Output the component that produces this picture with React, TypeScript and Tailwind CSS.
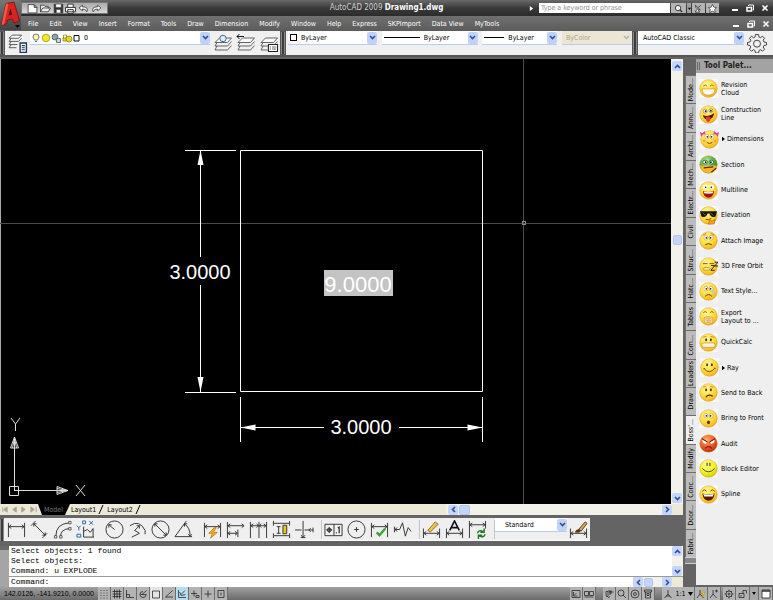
import React, { useState } from 'react';

const MENUS = [
  'File', 'Edit', 'View', 'Insert', 'Format', 'Tools', 'Draw', 'Dimension', 'Modify',
  'Window', 'Help', 'Express', 'SKPImport', 'Data View', 'MyTools',
];

const PALETTE_TABS = [
  'Mode...', 'Anno...', 'Archi...', 'Mech...', 'Electr...', 'Civil', 'Struc...', 'Hatc...', 'Tables',
  'Com...', 'Leaders', 'Draw', "Boss'...", 'Modify', 'Conc...', 'Door...', 'Fabri...',
];

interface Tool {
  label: string;
  flyout?: boolean;
  tone?: 'gold' | 'green' | 'red' | 'lime';
  face: React.ReactNode;
}

const dots = (
  <>
    <ellipse cx="7.5" cy="7" rx="1" ry="1.6" fill="#5b2c00" />
    <ellipse cx="12.5" cy="7" rx="1" ry="1.6" fill="#5b2c00" />
  </>
);

const bigEyes = (
  <>
    <ellipse cx="7.3" cy="7" rx="2.1" ry="2.6" fill="#fff" stroke="#b77a00" strokeWidth=".5" />
    <ellipse cx="12.7" cy="7" rx="2.1" ry="2.6" fill="#fff" stroke="#b77a00" strokeWidth=".5" />
    <circle cx="7.8" cy="7.2" r=".9" fill="#222" />
    <circle cx="12.2" cy="7.2" r=".9" fill="#222" />
  </>
);

const TOOLS: Tool[] = [
  {
    label: 'Revision\nCloud',
    face: (
      <>
        <path d="M4.500 7.500q2-2.500 4 0M11.500 7.500q2-2.500 4 0" stroke="#a06a00" strokeWidth=".9" fill="none" />
        <path d="M3 10.500h14q-.5 6.500-7 6.500t-7-6.500z" fill="#fff" stroke="#c08a10" strokeWidth=".7" />
        <path d="M4 13h12" stroke="#e4d8b0" strokeWidth=".5" />
      </>
    ),
  },
  {
    label: 'Construction\nLine',
    face: (
      <>
        <circle cx="6.500" cy="6.500" r="2.200" fill="#fff" stroke="#8a5200" strokeWidth=".6" />
        <circle cx="12.500" cy="5.800" r="2" fill="#fff" stroke="#8a5200" strokeWidth=".6" />
        <circle cx="7" cy="6.500" r="1" fill="#222" />
        <circle cx="12.500" cy="6" r="1" fill="#222" />
        <path d="M4 10.500q6 3 12-2-1 7-7 7-4-.5-5-5z" fill="#5a1400" />
        <path d="M7 13q3-2 5 0 .5 4-2 5-3 0-3-5z" fill="#e23a2e" />
      </>
    ),
  },
  {
    label: 'Dimensions',
    flyout: true,
    face: (
      <>
        <path d="M0 2l4 2-3 3zM5 1l1 4-4-1zM20 2l-4 2 3 3zM15 1l-1 4 4-1z" fill="#d9469a" />
        {bigEyes}
        <circle cx="4.500" cy="11.500" r="1.500" fill="#f59a6a" />
        <circle cx="15.500" cy="11.500" r="1.500" fill="#f59a6a" />
        <path d="M7 13q3 2.500 6 0" stroke="#8a3a00" fill="none" />
      </>
    ),
  },
  {
    label: 'Section',
    tone: 'green',
    face: (
      <>
        <path d="M1 11h18q-1 8-9 8t-9-8z" fill="#f7b52a" />
        <ellipse cx="6.500" cy="7.500" rx="2.500" ry="2" fill="#e8ffe0" stroke="#144d18" strokeWidth=".7" />
        <ellipse cx="13" cy="7.500" rx="2.500" ry="2" fill="#e8ffe0" stroke="#144d18" strokeWidth=".7" />
        <circle cx="7" cy="7.500" r=".9" />
        <circle cx="12.500" cy="7.500" r=".9" />
        <path d="M5 13.500l10-1M13 18l5-4" stroke="#5b2c00" strokeWidth="1.200" fill="none" />
      </>
    ),
  },
  {
    label: 'Multiline',
    face: (
      <>
        <circle cx="6.500" cy="6.500" r="2.500" fill="#fff" />
        <circle cx="13.500" cy="6.500" r="2.500" fill="#fff" />
        <circle cx="7" cy="6.500" r=".8" />
        <circle cx="13" cy="6.500" r=".8" />
        <path d="M4 10.500q6 2 12 0-1 7-6 7t-6-7z" fill="#a01212" />
        <path d="M5 11q5 1.500 10 0l-.5 2q-4.500 1-9 0z" fill="#fff" />
      </>
    ),
  },
  {
    label: 'Elevation',
    face: (
      <>
        <path d="M1 5.500h18l-.5 1.500-1 4q-5 2-6.500-3h-2q-1.500 5-6.500 3l-1-4z" fill="#17170f" />
        <path d="M4 7l3 3M12 7l3 3" stroke="#8d8d7d" strokeWidth=".7" />
        <path d="M7 14q3 1.500 6-1" stroke="#8a3a00" fill="none" />
        <path d="M10 19l1-4 3 1 3-2-1 5z" fill="#f6a51d" stroke="#a86000" strokeWidth=".6" />
      </>
    ),
  },
  {
    label: 'Attach Image',
    face: (
      <>
        <path d="M4 4.500l3.500-2M12.500 2.500l3.500 2" stroke="#a86c00" strokeWidth=".8" fill="none" />
        {bigEyes}
        <path d="M6.500 14.500q3.500-2.500 7 0" stroke="#6b2f00" fill="none" />
      </>
    ),
  },
  {
    label: '3D Free Orbit',
    face: (
      <>
        <path d="M4 7h5M11 7h5" stroke="#8a5200" />
        <ellipse cx="8" cy="12.500" rx="4" ry="1.500" fill="#fff1a0" stroke="#a86c00" strokeWidth=".7" />
        <path d="M12.500 9h4l-4 5h4M16.500 5.500H20l-3.500 4H20" stroke="#111" fill="none" strokeWidth=".9" />
      </>
    ),
  },
  {
    label: 'Text Style...',
    face: (
      <>
        {bigEyes}
        <path d="M15 8.500q2.500 3 0 4.500-2-1.500 0-4.500z" fill="#8fd6f5" />
        <path d="M6.500 15q3.500-3.500 7 0" stroke="#6b2f00" fill="none" />
      </>
    ),
  },
  {
    label: 'Export\nLayout to ...',
    face: (
      <>
        <path d="M4.500 6q2-2.500 4 0M11.500 6q2-2.500 4 0" stroke="#8a5200" strokeWidth=".9" fill="none" />
        <path d="M5.500 11q4.500-2 9 0 1 4.500-1.500 6.500-3 1.500-6 0-2.500-2-1.500-6.500z" fill="#f6d68c" stroke="#c98a34" strokeWidth=".6" />
        <path d="M7.500 12.500h5M8 14.500h4.500M8 16.300h4" stroke="#c98a34" strokeWidth=".6" />
      </>
    ),
  },
  {
    label: 'QuickCalc',
    face: (
      <>
        <path d="M4 4.500l4-1M12 3.500l4 1" stroke="#a86c00" strokeWidth=".7" />
        {dots}
        <rect x="3" y="10.500" width="14" height="4.500" rx="2.200" fill="#fff" stroke="#b88420" strokeWidth=".7" />
        <path d="M4 12.800h12" stroke="#d9bd80" strokeWidth=".5" />
      </>
    ),
  },
  {
    label: 'Ray',
    flyout: true,
    face: (
      <>
        {dots}
        <path d="M4.500 11.500q5.500 6 11-.5M3.500 11.500l2-.5M14.500 10.500l2 .5" stroke="#6b3a00" strokeWidth=".9" fill="none" />
      </>
    ),
  },
  {
    label: 'Send to Back',
    face: (
      <>
        {dots}
        <path d="M4.500 4.500l3-1M12 3.500l3 1" stroke="#a86c00" strokeWidth=".8" />
        <path d="M7 15q3-4 7.500-1" stroke="#5b2c00" strokeWidth="1.100" fill="none" />
      </>
    ),
  },
  {
    label: 'Bring to Front',
    face: (
      <>
        {bigEyes}
        <ellipse cx="10" cy="14" rx="1.600" ry="2" fill="#7a2a00" />
      </>
    ),
  },
  {
    label: 'Audit',
    tone: 'red',
    face: (
      <>
        <path d="M3.500 5.500l5 3-1.500 2-3-1.500zM16.500 5.500l-5 3 1.500 2 3-1.500z" fill="#fff" />
        <path d="M3 5l6 3.500M17 5l-6 3.500" stroke="#4a0a00" />
        <path d="M6.500 15q3.500-3.500 7 0" stroke="#4a0a00" fill="none" />
      </>
    ),
  },
  {
    label: 'Block Editor',
    tone: 'lime',
    face: (
      <>
        <path d="M8.500 4v3.500M11.500 4v3.500" stroke="#222" />
        <path d="M3.500 10q6.500 7 13 0" stroke="#444" fill="none" />
      </>
    ),
  },
  {
    label: 'Spline',
    face: (
      <>
        <path d="M3.500 6.500q2-3 4.500 0M12 6.500q2-3 4.500 0" stroke="#7a4200" fill="none" />
        <path d="M3.500 9q6.500 2 13 0-1 7.500-6.500 7.500t-6.500-7.500z" fill="#5a1a00" />
        <path d="M4.500 9.500q5.500 1.500 11 0l-1 2.500h-9z" fill="#fff" />
      </>
    ),
  },
];

function Gradients() {
  return (
    <svg className="absolute h-0 w-0" aria-hidden="true">
      <defs>
        <radialGradient id="gold" cx=".4" cy=".3" r=".8">
          <stop offset="0" stopColor="#fff99a" />
          <stop offset=".55" stopColor="#fdda38" />
          <stop offset="1" stopColor="#eda01a" />
        </radialGradient>
        <radialGradient id="green" cx=".4" cy=".3" r=".75">
          <stop offset="0" stopColor="#b8f0a0" />
          <stop offset=".6" stopColor="#43a83e" />
          <stop offset="1" stopColor="#1e6a24" />
        </radialGradient>
        <radialGradient id="red" cx=".4" cy=".3" r=".75">
          <stop offset="0" stopColor="#ffb070" />
          <stop offset=".55" stopColor="#ee5a2a" />
          <stop offset="1" stopColor="#b82a10" />
        </radialGradient>
        <radialGradient id="lime" cx=".4" cy=".3" r=".75">
          <stop offset="0" stopColor="#ffff90" />
          <stop offset=".6" stopColor="#f2f020" />
          <stop offset="1" stopColor="#c8c800" />
        </radialGradient>
      </defs>
    </svg>
  );
}

function Chevron({ dir = 'down' }: { dir?: 'down' | 'up' | 'left' | 'right' }) {
  const paths = {
    down: 'M2 3l2.500 2.500L7 3',
    up: 'M2 6l2.500-2.500L7 6',
    left: 'M6 2L3.500 4.500 6 7',
    right: 'M3 2l2.500 2.500L3 7',
  };
  return (
    <svg viewBox="0 0 9 9" className="h-[9px] w-[9px]" fill="none" stroke="#2f4f94" strokeWidth="1.600">
      <path d={paths[dir]} />
    </svg>
  );
}

function ScrollButton({ dir }: { dir: 'down' | 'up' | 'left' | 'right' }) {
  return (
    <button aria-label={`Scroll ${dir}`} className="flex h-[10px] w-[10px] shrink-0 items-center justify-center rounded-xs bg-[#c3d5fb]">
      <Chevron dir={dir} />
    </button>
  );
}

interface DropdownProps {
  label: string;
  value: string;
  className: string;
  disabled?: boolean;
  children?: React.ReactNode;
}

function Dropdown({ label, value, className, disabled, children }: DropdownProps) {
  return (
    <div className={`flex h-[14px] items-center border-b border-[#b9cdea] ${disabled ? 'bg-[#ece6d4]' : 'bg-white'} ${className}`}>
      {children}
      <select
        aria-label={label}
        disabled={disabled}
        className={`h-full min-w-0 flex-1 appearance-none bg-transparent px-1 ${disabled ? 'text-[#a9a493]' : 'text-black'}`}
      >
        <option>{value}</option>
      </select>
      <span className={`flex h-3 w-[10px] items-center justify-center rounded-xs ${disabled ? 'opacity-30' : 'bg-[#bed2fa]'}`}>
        <Chevron />
      </span>
    </div>
  );
}

function Icon({ children, className = 'h-5 w-5' }: { children: React.ReactNode; className?: string }) {
  return (
    <svg viewBox="0 0 20 20" className={`shrink-0 ${className}`} fill="none" stroke="#333" strokeWidth="1">
      {children}
    </svg>
  );
}

const sheets = (
  <g stroke="#555" strokeWidth=".9">
    <path d="M6.500 5h12l-4 4.500H2z" fill="#fafafa" />
    <path d="M4 9.500L2 13h12.500l4-4.500M4 13l-2 4h12.500l4-4.500" />
  </g>
);

function TitleBar() {
  return (
    <div className="grid h-4 grid-cols-[1fr_auto_1fr] items-center bg-linear-to-b from-[#6a6a6a] via-[#3a3a3a] to-[#2c2c2c]">
      <div className="flex pl-[21px]">
        <div className="flex h-3 w-[87px] items-center justify-around border border-[#777] bg-linear-to-b from-[#aaa] to-[#d8d8d8] px-1">
          <button aria-label="New">
            <Icon className="h-[11px] w-[11px]"><path d="M2 3h11l5 5v10H2zM13 3v5h5" fill="#fff" strokeWidth="1.500" /></Icon>
          </button>
          <button aria-label="Open">
            <Icon className="h-[11px] w-[11px]"><path d="M1 16V4h6l2 2h6v4M1 16l4-7h14l-4 7z" fill="#eee" strokeWidth="1.500" /></Icon>
          </button>
          <button aria-label="Save">
            <Icon className="h-[11px] w-[11px]"><path d="M2 2h16v16H2z" fill="#333" /><path d="M5 2h10v6H5zM6 12h8v6H6z" fill="#fff" /></Icon>
          </button>
          <button aria-label="Plot">
            <Icon className="h-[11px] w-[11px]"><path d="M5 8V2h10v6M1 8h18v8H1zM5 12h10v7H5z" fill="#fff" strokeWidth="1.800" /></Icon>
          </button>
          <button aria-label="Undo">
            <Icon className="h-[11px] w-[11px]"><path d="M8 4L2 9l6 5v-3q6-1 8 5 4-9-8-9z" fill="#fff" strokeWidth="1.500" /></Icon>
          </button>
          <button aria-label="Redo">
            <Icon className="h-[11px] w-[11px]"><path d="M12 4l6 5-6 5v-3q-6-1-8 5-4-9 8-9z" fill="#fff" strokeWidth="1.500" /></Icon>
          </button>
        </div>
      </div>
      <h1 className="text-[8px] leading-3 text-[#d0d0d0]">
        AutoCAD 2009 <b className="text-white">Drawing1.dwg</b>
      </h1>
      <div className="flex items-center justify-end gap-px pr-1">
        <svg viewBox="0 0 6 6" className="mr-1 h-[5px] w-[5px]"><path d="M1 0l4 3-4 3z" fill="#fff" /></svg>
        <input
          aria-label="Search"
          placeholder="Type a keyword or phrase"
          className="h-[10px] w-[131px] bg-white px-0.5 text-black placeholder:text-[#909090]"
        />
        <button aria-label="Find" className="flex h-[10px] w-[15px] items-center justify-center bg-[#b4b4b4]">
          <Icon className="h-[9px] w-[9px]"><circle cx="9" cy="9" r="6" fill="#eee" strokeWidth="2" /><path d="M13 13l5 5" strokeWidth="3" /></Icon>
        </button>
        <button aria-label="Search options" className="flex h-[10px] w-1 items-center justify-center bg-[#a0a0a0]">
          <svg viewBox="0 0 4 4" className="h-[3px] w-[3px]"><path d="M0 1h4L2 4z" /></svg>
        </button>
        <button aria-label="Communication Center" className="flex h-[10px] w-[13px] items-center justify-center bg-[#b4b4b4]">
          <Icon className="h-[9px] w-[9px]"><path d="M3 3q1 9 11 10zM9 8l6-5M6 12l-3 6h9l-2-5" strokeWidth="1.800" fill="#eee" /></Icon>
        </button>
        <button aria-label="Favorites" className="flex h-[10px] w-[13px] items-center justify-center bg-[#b4b4b4]">
          <Icon className="h-[9px] w-[9px]"><path d="M10 1l3 6 6 1-4 4 1 7-6-3-6 3 1-7-4-4 6-1z" fill="#fff" strokeWidth="1.600" /></Icon>
        </button>
        <WindowButtons />
      </div>
    </div>
  );
}

function WindowButtons() {
  return (
    <div className="flex gap-[7px] pl-[11px]">
      <button aria-label="Minimize">
        <svg viewBox="0 0 8 8" className="h-2 w-2"><path d="M1 6h6" stroke="#fff" strokeWidth="2" /></svg>
      </button>
      <button aria-label="Restore">
        <svg viewBox="0 0 8 8" className="h-2 w-2" fill="none" stroke="#fff"><path d="M2.500 2V1h5v5h-1" /><path d="M1 3.500h4.500v3.500H1z" strokeWidth="1.500" /></svg>
      </button>
      <button aria-label="Close">
        <svg viewBox="0 0 8 8" className="h-2 w-2"><path d="M1.500 1.500l5 5M6.500 1.500l-5 5" stroke="#fff" strokeWidth="1.600" /></svg>
      </button>
    </div>
  );
}

function MenuBar() {
  return (
    <nav className="flex h-[15px] items-center justify-between bg-linear-to-b from-[#707070] to-[#5c5c5c] pr-[3px] pl-[28px]">
      <div className="flex gap-[11px] text-white">
        {MENUS.map((menu) => (
          <button key={menu} className="whitespace-nowrap">{menu}</button>
        ))}
      </div>
      <WindowButtons />
    </nav>
  );
}

function Grip() {
  return <div className="h-[22px] w-1 shrink-0 self-center border-x border-[#888] bg-[#3c3c3c]" />;
}

function PropertyToolbar() {
  return (
    <div className="flex h-6 items-stretch gap-px bg-[#555]">
      <Grip />
      <div className="flex w-[275px] gap-0.5 bg-[#f0f0f0] pl-0.5">
        <button aria-label="Layer Properties">
          <Icon className="h-[21px] w-[21px]">
            <g stroke="#555" strokeWidth=".9">
              <path d="M5 2h9l-3 3H2z" fill="#fff" />
              <path d="M4 5L2 8h9l3-3M4 8l-2 3h8M4 11l-2 3h7" />
            </g>
            <path d="M12.500 9.500h6v9h-6z" fill="#fff" stroke="#1f3550" strokeWidth="1.300" />
            <path d="M14 12h3M14 14h3M14 16h3" stroke="#1f3550" />
          </Icon>
        </button>
        <Dropdown label="Layer" value="0" className="w-[180px] pl-0.5">
          <svg viewBox="0 0 48 10" className="h-[10px] w-12 shrink-0" fill="none" stroke="#555" strokeWidth=".8">
            <path d="M4 1q3 0 3 3 0 1-1.500 3h-3Q1 5 1 4q0-3 3-3z" fill="#fff6b0" />
            <path d="M3 8.500h2" />
            <circle cx="14" cy="5" r="3.800" fill="#f3e52a" stroke="#a59a10" />
            <circle cx="23" cy="4" r="3" fill="#7fa9ad" />
            <path d="M24.500 5.500h4v4h-4z" fill="#c8d4e4" />
            <path d="M31.500 5V2h3v3" stroke="#8d8410" />
            <path d="M31 5h3.500v3H31z" fill="#e5d82a" stroke="#8d8410" />
            <circle cx="37" cy="6" r="3" fill="#e5d82a" stroke="#8d8410" />
            <path d="M42 2.500h5v5.500h-5z" stroke="#111" strokeWidth="1" fill="#fff" />
          </svg>
        </Dropdown>
        <button aria-label="Make Object's Layer Current" className="pl-px">
          <Icon>{sheets}<circle cx="10" cy="5.500" r="3.200" fill="#dceefa" stroke="#2a5a86" strokeWidth=".9" /></Icon>
        </button>
        <button aria-label="Layer Previous" className="pl-px">
          <Icon>{sheets}<path d="M8 3.500H1M3.500 1L1 3.500 3.500 6" stroke="#111" /></Icon>
        </button>
        <button aria-label="Layer States Manager" className="pl-px">
          <Icon>
            {sheets}
            <path d="M9.500 11.500h9v7h-9z" fill="#fff" stroke="#222" strokeWidth="1.100" />
            <path d="M11 14h1M13 14h4M11 16h1M13 16h4" stroke="#444" strokeWidth=".8" />
          </Icon>
        </button>
      </div>
      <Grip />
      <div className="flex w-[346px] justify-between bg-[#f0f0f0] pl-0.5">
        <Dropdown label="Color" value="ByLayer" className="w-[89px] pl-0.5">
          <span className="h-[7px] w-[7px] border border-black" />
        </Dropdown>
        <Dropdown label="Linetype" value="ByLayer" className="w-24 pl-0.5">
          <span className="h-px w-9 bg-black" />
        </Dropdown>
        <Dropdown label="Lineweight" value="ByLayer" className="w-[75px] pl-0.5">
          <span className="h-px w-5 bg-black" />
        </Dropdown>
        <Dropdown label="Plot Style" value="ByColor" disabled className="w-[70px]" />
      </div>
      <Grip />
      <div className="flex flex-1 justify-between bg-[#f0f0f0]">
        <Dropdown label="Workspace" value="AutoCAD Classic" className="w-[106px] pl-px" />
        <button aria-label="Workspace Settings" className="mr-1.5">
          <Icon>
            <path d="M8.500 1.500h3l.5 2.500 1.500.7 2-1.500 2 2-1.300 2 .8 1.800 2.500.5v2.500l-2.500.5-.8 1.500 1.300 2.200-2 2-2-1.500-1.500.8-.5 2.500h-3L8 17.500l-1.500-.8-2 1.500-2-2 1.300-2.200L3 12.500.5 12V9.500L3 9l.8-1.800-1.300-2 2-2 2 1.500L8 4z" strokeWidth=".9" />
            <circle cx="10" cy="10.700" r="3.500" strokeWidth=".9" />
          </Icon>
        </button>
      </div>
    </div>
  );
}

// Model space: a 3 x 3 square with its two dimensions and the area text
function DrawingArea() {
  return (
    <div className="relative min-w-0 flex-1 cursor-crosshair bg-black">
      <svg className="absolute inset-0 h-full w-full" fill="none" stroke="#fff" fontFamily="'Liberation Sans', Arial, sans-serif">
        <path d="M.5 0v446" stroke="#aaa" />
        <g stroke="#4c4c4c">
          <line x1="0" y1="164.5" x2="100%" y2="164.5" />
          <line x1="523.5" y1="0" x2="523.5" y2="100%" />
          <rect x="522.5" y="162.5" width="3" height="3" stroke="#8a8a8a" />
        </g>
        <path d="M240.500 91.500h242v241h-242z" />
        <path d="M185 91.500h51M185 333.500h51M200.500 92v106M200.500 226v107M240.500 338v45M482.500 338v45M241 368.500h83M399 368.500h83" />
        <g fill="#fff" stroke="none">
          <path d="M200.500 91l3 15h-6zM200.500 333l3-15h-6zM240.500 368.500l15-3v6zM482.500 368.500l-15-3v6z" />
          <text x="200" y="220" fontSize="20" textAnchor="middle">3.0000</text>
          <text x="361" y="375" fontSize="20" textAnchor="middle">3.0000</text>
          <rect x="324" y="211" width="69" height="26" fill="#c4c4c4" />
          <text x="358" y="233" fontSize="22" textAnchor="middle">9.0000</text>
        </g>
        <g stroke="#ddd">
          <path d="M9.500 427.500h9v9h-9zM14.500 432V378M14.500 378l4 11h-8zM12.500 389l2-10 2 10M14.500 431.500H68M68 431.500l-11-4v8zM57 429.500l10 2-10 2" />
          <path d="M11 359l4.500 6 4.500-6M15.500 365v7M76 426l9 11M85 426l-9 11" />
        </g>
      </svg>
    </div>
  );
}

function LayoutTabs() {
  return (
    <div className="flex h-[11px] items-center bg-[#ece9d8]">
      <div className="flex w-[38px] justify-around">
        {['M2 1v6M7 1L3 4l4 3z', 'M6 1L2 4l4 3z', 'M2 1l4 3-4 3z', 'M1 1l4 3-4 3zM7 1v6'].map((d, i) => (
          <button key={d} aria-label={['First tab', 'Previous tab', 'Next tab', 'Last tab'][i]}>
            <svg viewBox="0 0 8 8" className="h-[7px] w-[7px]" fill="#a8a594" stroke="#a8a594"><path d={d} /></svg>
          </button>
        ))}
      </div>
      <svg viewBox="0 0 5 11" className="h-[11px] w-[5px]"><path d="M0 0h5v11H4z" /></svg>
      <button className="h-[11px] bg-black px-px text-[#777]">Model</button>
      <svg viewBox="0 0 6 11" className="h-[11px] w-[6px]"><path d="M0 0h6L1 11H0z" /></svg>
      <button className="h-[11px] px-px text-black">Layout1</button>
      <svg viewBox="0 0 9 11" className="h-[11px] w-[9px]" stroke="#000"><path d="M6 1L2 10" /></svg>
      <button className="h-[11px] px-px text-black">Layout2</button>
      <svg viewBox="0 0 9 11" className="h-[11px] w-[9px]" stroke="#000"><path d="M6 1L2 10" /></svg>
      <div className="ml-auto flex h-[11px] w-[237px] items-center bg-[#f3f2ea] pl-0.5">
        <ScrollButton dir="left" />
        <span className="ml-px h-[10px] w-[11px] rounded-xs border border-[#b2c6f0] bg-[#c3d5fb]" />
        <span className="flex-1" />
        <ScrollButton dir="right" />
        <span className="h-full w-[11px] bg-[#ece9d8]" />
      </div>
    </div>
  );
}

const span = 'M1.500 3v15M18.500 3v15M2 7h16M4.500 5L2 7l2.500 2M15.500 5L18 7l-2.500 2';
const lowSpan = 'M1.500 9v10M18.500 9v10M2 14h16M4.500 12L2 14l2.500 2M15.500 12l2.500 2-2.500 2';

const DIM_GROUPS: { name: string; art: React.ReactNode }[][] = [
  [
    { name: 'Linear', art: <path d={span} /> },
    { name: 'Aligned', art: <path d="M1 6l5-5M13 19l5-5M4 4l12 12M4 7V4h3M13 16h3v-3" /> },
    { name: 'Arc Length', art: <><path d="M3 17Q3 4 17 3M8 17q0-7 9-8" /><path d="M1.500 16.500h2.500v2.500H1.500zM7 16.500h2.500v2.500H7zM16.500 1.500h2.500v2.500h-2.500zM16.500 8h2.500v2.500h-2.500z" fill="#fff" strokeWidth=".8" /></> },
    { name: 'Ordinate', art: <><path d="M8 7v11h11M8 12l4-2 3 3 3-4v9" /><path d="M7 1h3v3H7zM14 1l4 4M18 1l-4 4M1 6l2 2 2-2M3 8v3M1 15h4v3H1z" stroke="#2467a8" /></> },
  ],
  [
    { name: 'Radius', art: <><circle cx="10" cy="10" r="9" /><path d="M10 10L4 5M4 8V5h3" /></> },
    { name: 'Jogged', art: <path d="M2 6q10-7 16 5v4M4 18l8-4-5-3 5-5M9 6h3v3" /> },
    { name: 'Diameter', art: <><circle cx="10" cy="10" r="9" /><path d="M4 4l12 12M4 7V4h3M13 16h3v-3" /></> },
    { name: 'Angular', art: <path d="M13 1L1 17.500h18M11 4q6 4 6 13M11 7V4h3M15 15l2 2 2-2" /> },
  ],
  [
    { name: 'Quick Dimension', art: <><path d={span} /><path d="M12 8l-6 6h4l-2 5 7-6h-4l3-5z" fill="#f4b02e" stroke="#b87400" strokeWidth=".8" /></> },
    { name: 'Baseline', art: <path d="M1.500 2v17M2 6h17M2 14h10M12.500 10v8M16.500 4L19 6l-2.500 2M9.500 12l2.500 2-2.500 2M4.500 4L2 6l2.500 2M4.500 12L2 14l2.500 2" /> },
    { name: 'Continue', art: <path d="M1.500 2v17M10.500 2v17M18.500 2v17M2 6h16M4.500 4L2 6l2.500 2M8 4l2 2-2 2M13 4l-2 2 2 2M15.500 4L18 6l-2.500 2" /> },
    { name: 'Dimension Space', art: <><path d="M1.500 1v5M18.500 1v5M2 3.500h16M1.500 14v5M18.500 14v5M2 16.500h16M5 7h4M5 14h4M7 7v7" /><path d="M11.500 5.500h4v9h-4z" fill="#f4c60e" /></> },
    { name: 'Dimension Break', art: <path d="M8.500 1v17M0 10.500h7M10 10.500h9M19 8v5M16.500 8.500l-2 2 2 2M6.500 16l2 2.500 2-2.500M6 18.500h5" /> },
  ],
  [
    { name: 'Tolerance', art: <><path d="M1 4.500h18v12H1zM10.500 4.500v12" /><circle cx="5.500" cy="10.500" r="2" /><path d="M2.500 10.500h6M5.500 7.500v6M14.500 8.500l1.500-1V14M12.500 13.500h1" strokeWidth="1.300" /></> },
    { name: 'Center Mark', art: <><circle cx="10" cy="10" r="9" /><path d="M10 7.500v5M7.500 10h5" /></> },
    { name: 'Inspection', art: <><path d={span} /><path d="M7 13l3 3 6-7" stroke="#3da338" strokeWidth="2.500" /></> },
    { name: 'Jogged Linear', art: <path d="M1.500 7v6M2 10h5l3-7 3 14 3-9 3 4M4.500 8L2 10l2.500 2" /> },
  ],
  [
    { name: 'Dimension Edit', art: <><path d={lowSpan} /><path d="M6 11l8-9 3 2.500-8 8z" fill="#f0c050" stroke="#8a5a10" strokeWidth=".9" /></> },
    { name: 'Dimension Text Edit', art: <><path d={lowSpan} /><path d="M5 11l5-10 5 10M7 8h6" strokeWidth="1.700" stroke="#111" /></> },
    { name: 'Dimension Update', art: <><path d="M1.500 1v18M18.500 1v8M2 5h16M4.500 3L2 5l2.500 2M15.500 3L18 5l-2.500 2" /><path d="M10 14q1-4 6-2M17 9v4h-4M18 15q-1 4-6 2M11 20v-4h4" stroke="#1d7a22" strokeWidth="1.500" /></> },
  ],
];

function DimensionToolbar() {
  return (
    <div className="my-[3px] flex">
      <Grip />
      <div className="flex h-[23px] items-center border-b border-white bg-[#efefef] pl-px">
        {DIM_GROUPS.map((group, i) => (
          <div key={i} className="flex items-center border-[#c4c4c4] pr-1.5 nth-[n+3]:border-r nth-[n+3]:pr-[5px]">
            {group.map(({ name, art }) => (
              <button key={name} aria-label={name} title={name} className="flex w-[23px] justify-center">
                <Icon className="h-[19px] w-[19px]">{art}</Icon>
              </button>
            ))}
          </div>
        ))}
        <div className="self-start">
          <Dropdown label="Dim Style" value="Standard" className="w-[72px] pl-1.5" />
        </div>
        <button aria-label="Dimension Style" className="flex w-[23px] justify-center">
          <Icon className="h-[19px] w-[19px]">
            <path d={lowSpan} />
            <path d="M10 10l7-8 2 1.500-6 8z" fill="#d9a25a" stroke="#6a3c14" />
            <path d="M6 13q2-4 5-3l1.500 1.500q-2 3-6.500 1.500z" fill="#5a3416" stroke="none" />
          </Icon>
        </button>
      </div>
    </div>
  );
}

function CommandWindow() {
  const [command, setCommand] = useState('');

  return (
    <div className="mt-0.5 flex bg-white font-['Liberation_Mono',monospace] text-[8px] leading-[10px] text-black">
      <div className="w-[9px] border-t-4 border-[#6a6a6a] bg-[#a5a5a5]" />
      <div className="min-w-0 flex-1">
        <div className="flex border-b border-[#999]">
          <pre className="flex-1 pl-0.5 font-['Liberation_Mono',monospace]">{'Select objects: 1 found\nSelect objects:\nCommand: u EXPLODE'}</pre>
          <div className="flex w-[11px] flex-col items-start justify-between bg-[#f3f2ea]">
            <ScrollButton dir="up" />
            <ScrollButton dir="down" />
          </div>
        </div>
        <div className="flex h-[10px] items-center">
          <label htmlFor="command" className="pl-0.5">Command:</label>
          <input id="command" value={command} onChange={(e) => setCommand(e.target.value)} className="h-full min-w-0 flex-1 px-1 outline-none" />
          <div className="flex w-[50px] items-center bg-[#f3f2ea]">
            <ScrollButton dir="left" />
            <span className="ml-px h-[9px] w-[9px] rounded-xs border border-[#b2c6f0] bg-[#c3d5fb]" />
            <span className="flex-1" />
            <ScrollButton dir="right" />
            <span className="h-[10px] w-[11px] bg-[#ece9d8]" />
          </div>
        </div>
      </div>
    </div>
  );
}

function ToolPalette() {
  return (
    <aside className="flex w-[88px] shrink-0">
      <div className="flex w-[11px] flex-col pt-4">
        <div className="flex h-[482px] flex-col">
          {PALETTE_TABS.map((tab) => (
            <button
              key={tab}
              className={`flex min-h-0 w-full flex-1 items-center justify-center border-t border-l border-[#6e6e6e] leading-[9px] whitespace-nowrap text-black ${tab.startsWith('Boss') ? 'bg-[#efefef]' : 'bg-[#bcbcbc]'}`}
            >
              <span className="rotate-180 [writing-mode:vertical-rl]">{tab}</span>
            </button>
          ))}
        </div>
        <div className="h-[7px] border-y border-[#d0d0d0] bg-[#888]" />
      </div>
      <div className="flex flex-1 flex-col bg-[#efefef]">
        <h2 className="flex h-[14px] items-center gap-1 bg-[#a3a3a3] pl-px text-[8px] font-bold text-[#222]">
          <span className="h-2 w-[3px] border-x border-[#666]" />
          Tool Palet...
        </h2>
        <ul className="mt-[3px] grid h-[431px] auto-rows-fr">
          {TOOLS.map((tool) => (
            <li key={tool.label} className="flex items-center">
              <button className={`flex items-center gap-[3px] text-left leading-2 text-black ${tool.flyout ? 'pl-1' : 'pl-[3px]'}`}>
                <svg viewBox="0 0 20 20" className="h-[19px] w-[19px] shrink-0 bg-[#f8f8f8]">
                  <circle cx="10" cy="10" r="9.300" fill={`url(#${tool.tone ?? 'gold'})`} stroke="#d99a24" strokeWidth=".5" />
                  {tool.face}
                </svg>
                {tool.flyout && <svg viewBox="0 0 4 6" className="-mr-px h-1.5 w-[3px]"><path d="M0 0l4 3-4 3z" /></svg>}
                <span className="whitespace-pre">{tool.label}</span>
              </button>
            </li>
          ))}
        </ul>
      </div>
    </aside>
  );
}

const STATUS_TOGGLES: { name: string; tint?: 'blue' | 'white'; d: string }[] = [
  { name: 'Snap', d: 'M3 3h2M9 3h2M15 3h2M3 8h2M9 8h2M15 8h2M3 13h2M9 13h2M15 13h2M3 18h2M9 18h2M15 18h2' },
  { name: 'Grid', d: 'M5 1v18M10 1v18M15 1v18M1 5h18M1 10h18M1 15h18' },
  { name: 'Ortho', d: 'M3 2v15h15M3 11h6v6' },
  { name: 'Polar', d: 'M17 3L8 11M10 5a6 6 0 106 6M5 11h12' },
  { name: 'Osnap', tint: 'white', d: 'M3 4h14v14H3z' },
  { name: 'Otrack', d: 'M17 3L3 16h15' },
  { name: 'Ducs', tint: 'blue', d: 'M3 2v15h15M6 13l10-10M5 6l4 7 8-2' },
  { name: 'Dyn', d: 'M8 3v12M2 9h12M12 13h6v4h-6z' },
  { name: 'Lwt', d: 'M10 3v14M3 10h14' },
  { name: 'QP', d: 'M4 3h12v14H4zM10 7v6' },
];

const cell = 'flex h-[13px] items-center justify-center border-r border-[#6c6c6c]';

function StatusButton({ name, d, tint, className = 'w-[13px]' }: { name: string; d: string; tint?: string; className?: string }) {
  const bg = tint === 'blue' ? 'bg-[#b7dcee]' : tint === 'white' ? 'bg-[#e4e4e4]' : 'bg-[#b3b3b3]';
  return (
    <button aria-label={name} title={name} className={`${cell} ${bg} ${className}`}>
      <Icon className="h-[10px] w-[10px]"><path d={d} strokeWidth="1.500" stroke="#222" fill="none" /></Icon>
    </button>
  );
}

function StatusBar() {
  return (
    <footer className="flex h-[13px] items-center bg-linear-to-b from-[#a0a0a0] to-[#6c6c6c] text-black">
      <span className="w-[98px] shrink-0 pl-1 font-['Liberation_Sans',Arial,sans-serif] whitespace-nowrap">142.0126, -141.9210, 0.0000</span>
      {STATUS_TOGGLES.map((toggle) => (
        <StatusButton key={toggle.name} {...toggle} />
      ))}
      <div className="flex-1" />
      <StatusButton name="Model" d="M2 3h16v14H2zM5 6v8h8M6 13l5-5" />
      <StatusButton name="Quick View Layouts" d="M1 5h8v8H1zM11 5h8v8h-8zM1 16h18" />
      <div className="w-[7px]" />
      <StatusButton name="Pan" d="M4 9V5h4v10H5zM8 4h4v8M14 2v8M10 6h9M12 15l-4 3" />
      <StatusButton name="Zoom" d="M8 2a6 6 0 100 12 6 6 0 000-12M12 12l6 6" />
      <StatusButton name="SteeringWheel" d="M10 2a8 8 0 100 16 8 8 0 000-16M10 7a3 3 0 100 6 3 3 0 000-6" />
      <StatusButton name="ShowMotion" d="M3 2h14v4H3zM5 6v12h10V6M8 9h4v4H8z" />
      <div className="w-[7px]" />
      <button className={`${cell} w-[33px] gap-0.5 bg-[#b3b3b3]`}>
        <Icon className="h-[10px] w-[10px]"><path d="M10 2v8L3 18M10 10l7 8M6 14h8" strokeWidth="1.800" /></Icon>
        1:1
        <svg viewBox="0 0 5 4" className="h-1 w-[5px]"><path d="M0 0h5L2.500 4z" /></svg>
      </button>
      <button aria-label="Annotation Visibility" className={`${cell} w-[13px] bg-[#b3b3b3]`}>
        <Icon className="h-[10px] w-[10px]">
          <path d="M8 2v8l-6 8M8 10l7 8" strokeWidth="1.800" />
          <path d="M14 3l-3 6h3l-1 6 5-8h-3l2-4z" fill="#ffd428" stroke="#b08000" />
        </Icon>
      </button>
      <StatusButton name="Auto Scale" d="M8 2v8l-6 8M8 10l7 8M12 4h6M15 1v6" />
      <div className="w-0.5" />
      <StatusButton name="Workspace" d="M10 4a6 6 0 100 12 6 6 0 000-12M10 8a2 2 0 100 4 2 2 0 000-4M10 1v3M10 16v3M1 10h3M16 10h3M4 4l2 2M14 14l2 2M4 16l2-2M14 6l2-2" />
      <StatusButton name="Lock" className="w-[14px]" d="M2 9h10v8H2zM10 9V3h7v6M6 12v3" />
      <button aria-label="Status menu" className={`${cell} w-[9px] bg-[#a8a8a8]`}>
        <svg viewBox="0 0 5 4" className="h-[3px] w-1"><path d="M0 0h5L2.500 4z" /></svg>
      </button>
      <button aria-label="Clean Screen" className={`${cell} w-[14px] bg-[#b3b3b3]`}>
        <Icon className="h-[10px] w-[10px]"><path d="M2 2h16v16H2z" fill="#fff" strokeWidth="1.800" /><path d="M2 4h16" strokeWidth="3" /></Icon>
      </button>
    </footer>
  );
}

export default function App() {
  return (
    <div className="flex min-h-screen flex-col bg-[#646464] font-['DejaVu_Sans_Condensed','DejaVu_Sans',sans-serif] text-[7px] leading-[10px]">
      <Gradients />
      <header className="relative">
        <TitleBar />
        <MenuBar />
        <button aria-label="Application menu" className="absolute top-0 left-0 h-[30px] w-[21px] bg-linear-to-b from-[#777] to-[#444]">
          <svg viewBox="0 0 21 30" className="h-[30px] w-[21px]">
            <path d="M1.500 25L6 3.500l8-1.500 5.500 19-5.500 2-1.500-4-5 1-1 4z" fill="#d8231f" stroke="#7c0c0c" strokeWidth=".8" />
            <path d="M8.500 15.500l1.800-7 2 6.200z" fill="#58100f" />
            <path d="M1.500 25L6 3.500l2.500.5L4 24.500z" fill="#f0584c" />
            <path d="M15 25h5l-2.500 3z" fill="#000" />
          </svg>
        </button>
      </header>
      <PropertyToolbar />
      <main className="flex flex-1 border-t-2 border-[#555]">
        <div className="flex min-w-0 flex-1 flex-col pt-0.5">
          <div className="flex flex-1">
            <DrawingArea />
            <div className="flex w-3 flex-col items-center bg-[#f3f2ea] pt-0.5 pb-px">
              <ScrollButton dir="up" />
              <span className="flex-[165]" />
              <span className="h-[10px] w-[9px] rounded-xs border border-[#b2c6f0] bg-[#c3d5fb]" />
              <span className="flex-[250]" />
              <ScrollButton dir="down" />
            </div>
          </div>
          <LayoutTabs />
          <DimensionToolbar />
          <CommandWindow />
        </div>
        <div className="w-0.5" />
        <div className="flex pt-0.5 pb-0.5">
          <ToolPalette />
        </div>
      </main>
      <StatusBar />
    </div>
  );
}
